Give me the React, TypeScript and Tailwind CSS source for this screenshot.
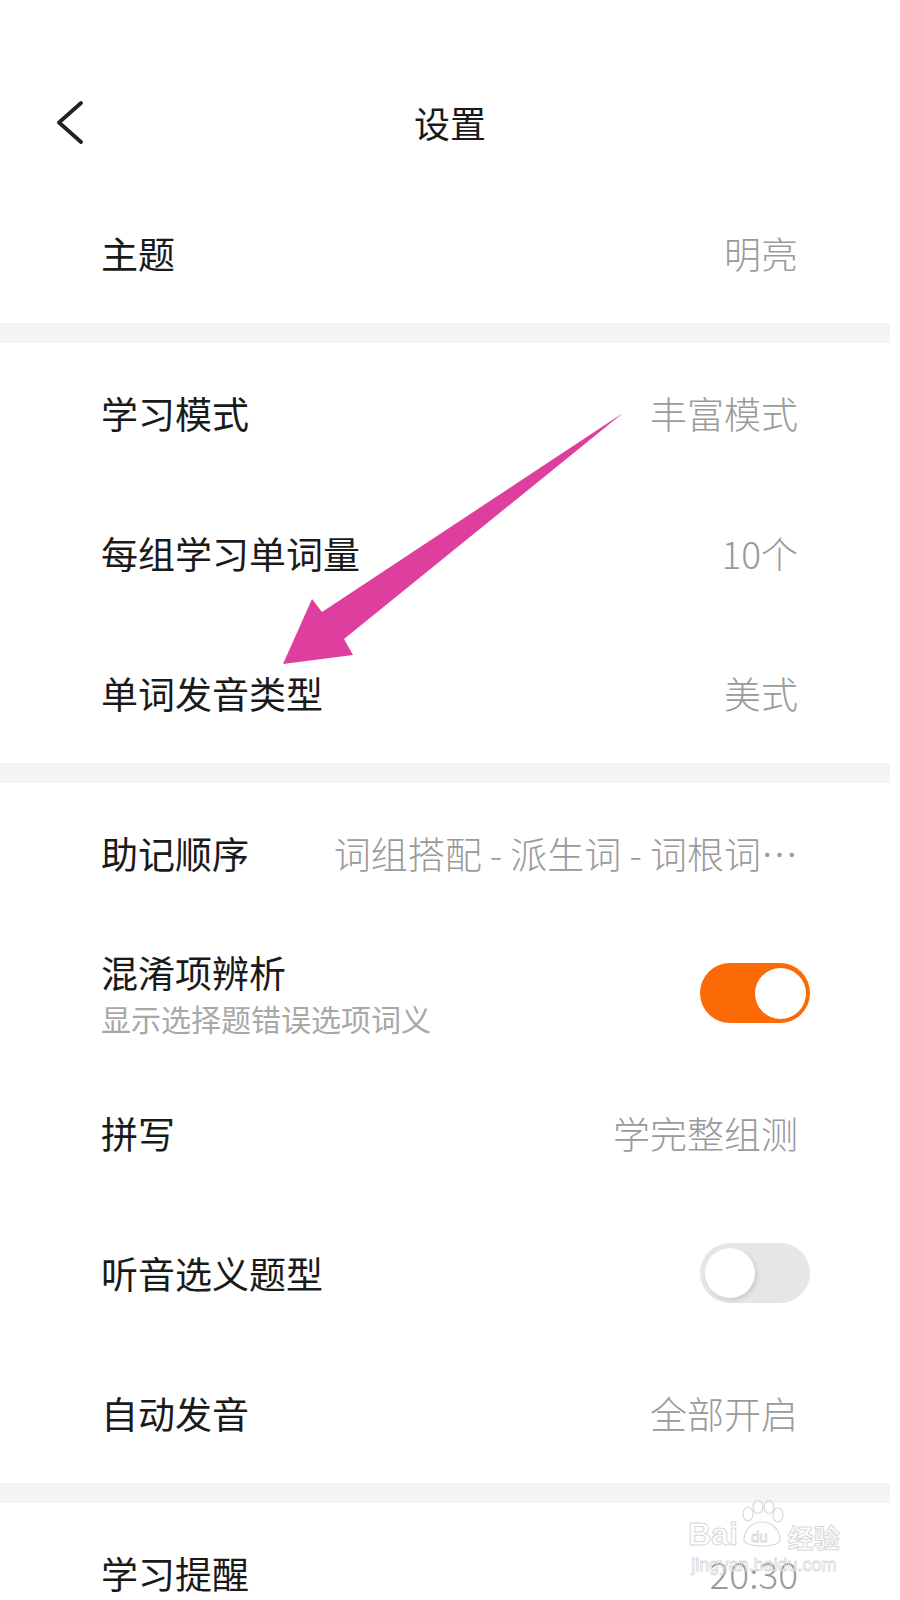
import React from 'react';

const font = { fontFamily: '"Noto Sans CJK SC", "Noto Sans", sans-serif' };

type RowProps = {
    label: string;
    value?: string;
    sub?: string;
    toggle?: 'on' | 'off';
};

function Toggle({ on }: { on: boolean }) {
    if (on) {
        return (
            <div className="-mr-[12px] flex h-[60px] w-[110px] items-center justify-end rounded-full bg-[#fb6a06] pr-[4px]">
                <div className="h-[51px] w-[51px] rounded-full bg-white" />
            </div>
        );
    }
    return (
        <div className="-mr-[12px] flex h-[60px] w-[110px] items-center rounded-full bg-[#e6e6e6] pl-[5px]">
            <div className="h-[50px] w-[50px] rounded-full bg-white shadow-[2px_2px_4px_rgba(0,0,0,0.12)]" />
        </div>
    );
}

function Row({ label, value, sub, toggle }: RowProps) {
    return (
        <div className="flex h-[140px] items-center justify-between pl-[101px] pr-[102px]">
            <div className="flex shrink-0 flex-col">
                <span className="text-[37px] font-normal leading-none text-[#1a1a1a]">{label}</span>
                {sub && <span className="mt-[12px] text-[30px] leading-none text-[#a8a8a8]">{sub}</span>}
            </div>
            {value && (
                <span className="ml-[82px] min-w-0 whitespace-nowrap text-right text-[37px] font-light leading-none text-[#9a9a9a]">
                    {value}
                </span>
            )}
            {toggle && <Toggle on={toggle === 'on'} />}
        </div>
    );
}

function Band() {
    return <div className="mr-[10px] h-[20px] bg-[#f4f4f4]" />;
}

export default function App() {
    return (
        <div className="relative h-[1600px] w-[900px] overflow-hidden bg-white" style={font}>
            {/* header */}
            <div className="mb-[31px] mt-[92px] grid h-[60px] grid-cols-[1fr_auto_1fr] items-center">
                <div className="pl-[56px]">
                    <svg width="28" height="44" viewBox="0 0 28 44" fill="none">
                        <polyline points="25,3 3,22.5 25,42" stroke="#222" strokeWidth="3.8" strokeLinecap="round" strokeLinejoin="round" />
                    </svg>
                </div>
                <h1 className="text-[36px] font-normal leading-none text-[#1a1a1a]">设置</h1>
                <div />
            </div>

            <Row label="主题" value="明亮" />
            <Band />
            <Row label="学习模式" value="丰富模式" />
            <Row label="每组学习单词量" value="10个" />
            <Row label="单词发音类型" value="美式" />
            <Band />
            <Row label="助记顺序" value="词组搭配 - 派生词 - 词根词…" />
            <Row label="混淆项辨析" sub="显示选择题错误选项词义" toggle="on" />
            <Row label="拼写" value="学完整组测" />
            <Row label="听音选义题型" toggle="off" />
            <Row label="自动发音" value="全部开启" />
            <Band />
            <Row label="学习提醒" value="20:30" />

            {/* annotation arrow */}
            <svg className="pointer-events-none absolute left-0 top-0" width="900" height="1600">
                <polygon points="623,413 322,612 312,599 283,664 353,655 344,639" fill="#de3f9e" />
            </svg>

            {/* watermark */}
            <div className="pointer-events-none absolute left-[688px] top-[1500px] flex flex-col items-center">
                <div className="flex items-end">
                    <span className="text-[32px] font-bold leading-none text-transparent [-webkit-text-stroke:1px_#d8d8d8]" style={{ fontFamily: '"Liberation Sans", sans-serif' }}>Bai</span>
                    <svg width="48" height="50" viewBox="0 0 48 50" fill="none" stroke="#d8d8d8" strokeWidth="1.2">
                        <ellipse cx="10" cy="14" rx="5" ry="7" />
                        <ellipse cx="20" cy="7" rx="5" ry="6.5" />
                        <ellipse cx="31" cy="7" rx="5" ry="6.5" />
                        <ellipse cx="40" cy="15" rx="5" ry="7" />
                        <path d="M6 40 C6 28 16 22 24 22 C32 22 42 28 42 40 C42 48 6 48 6 40 Z" />
                        <text x="13" y="42" fontSize="15" fill="none" stroke="#d8d8d8" strokeWidth="0.8" fontFamily="Liberation Sans, sans-serif">du</text>
                    </svg>
                    <span className="ml-[2px] text-[26px] font-bold leading-none text-transparent [-webkit-text-stroke:1px_#d8d8d8]">经验</span>
                </div>
                <span className="mt-[6px] text-[18px] leading-none text-transparent [-webkit-text-stroke:0.8px_#d8d8d8]" style={{ fontFamily: '"Liberation Sans", sans-serif' }}>jingyan.baidu.com</span>
            </div>
        </div>
    );
}
